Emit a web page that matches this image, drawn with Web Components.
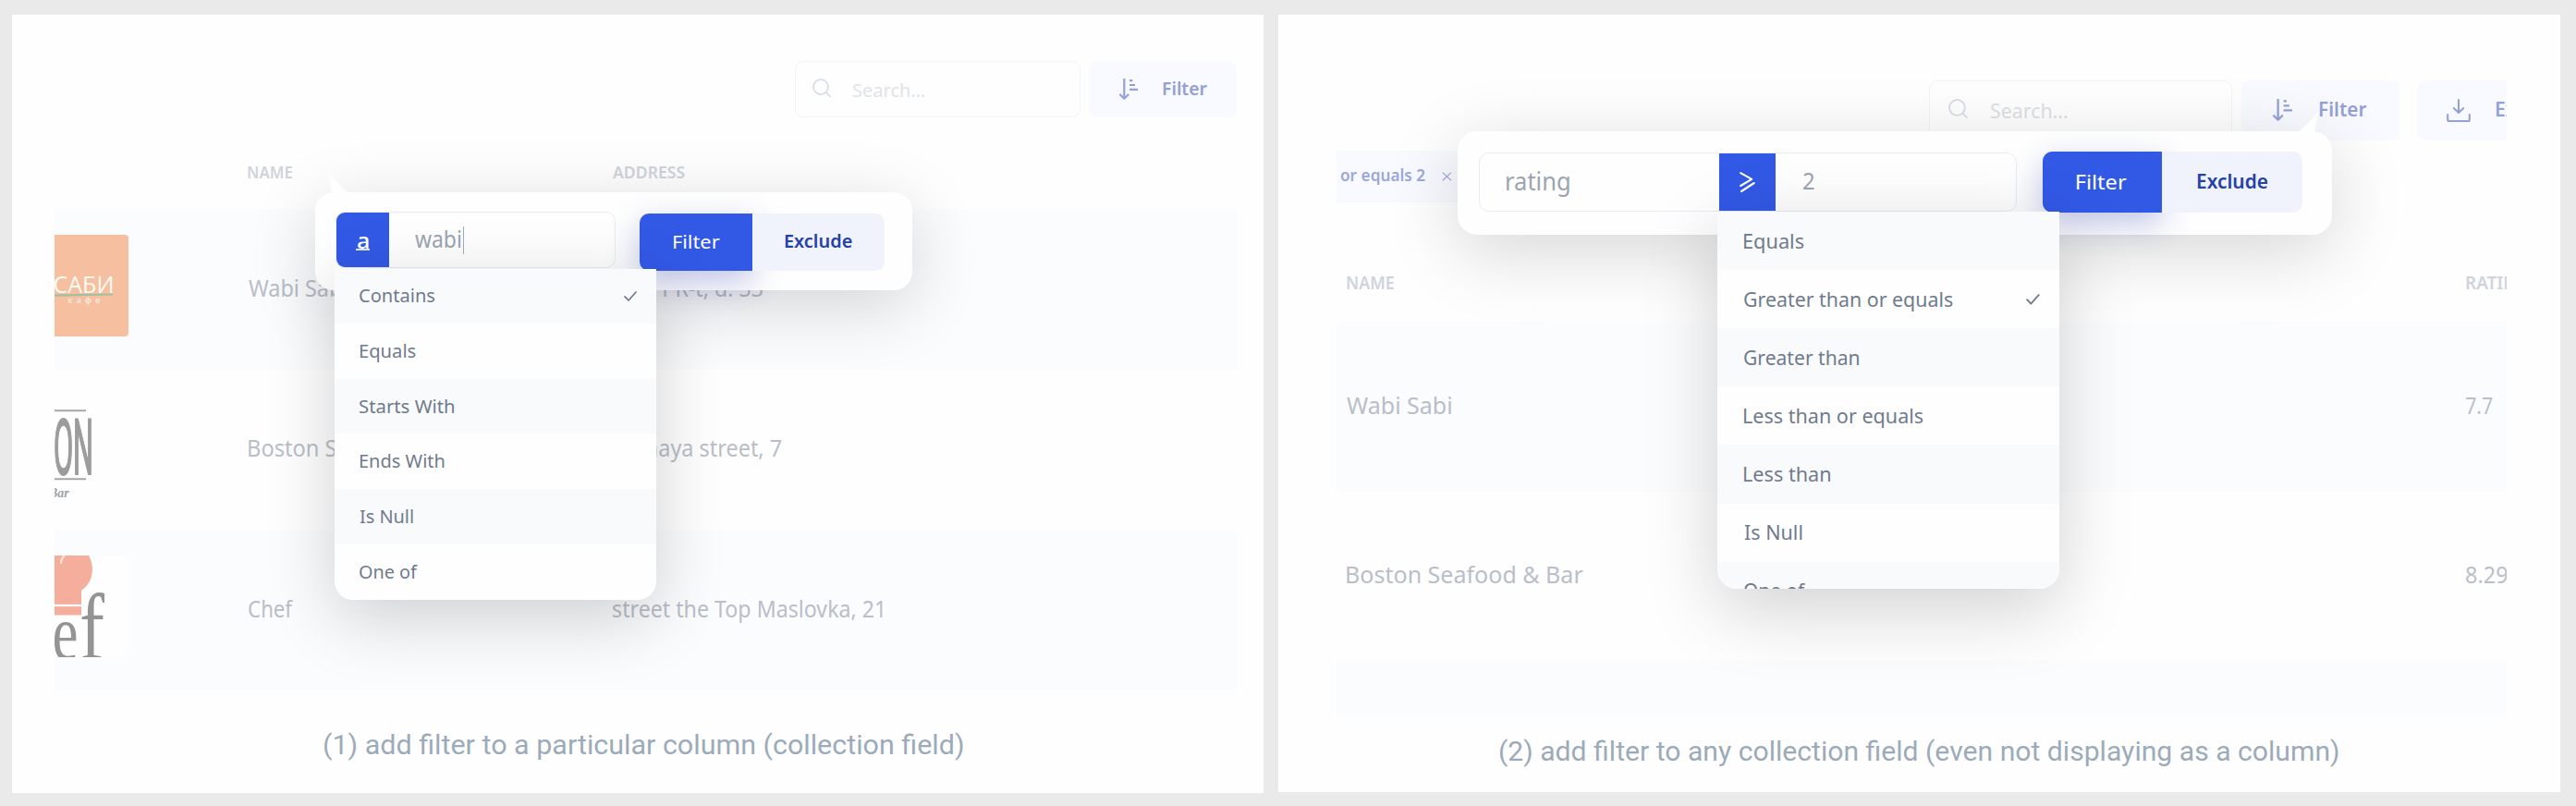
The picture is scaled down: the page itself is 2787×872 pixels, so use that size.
<!DOCTYPE html>
<html lang="en">
<head>
<meta charset="utf-8">
<title>Collection filters</title>
<style>
html,body{margin:0;height:872px;overflow:hidden}
body{background:#eaeaea;font-family:"Noto Sans","Open Sans",sans-serif;box-sizing:border-box;padding:16px 17px 0 13px;display:grid;grid-template-columns:1354px 1387px;column-gap:16px;align-items:start}
</style>
</head>
<body>
<filter-card kind="column" style="--k:1"></filter-card>
<filter-card kind="any" style="--k:1.058"></filter-card>
<script>
const define=(name,html,setup)=>customElements.define(name,class extends HTMLElement{
  connectedCallback(){
    if(this.shadowRoot)return;
    this.attachShadow({mode:'open'}).innerHTML=typeof html==='function'?html(this):html;
    if(setup)setup(this,this.shadowRoot);
  }
});

/* One line of text whose ink spans exactly the width given in "w". */
const ctx=document.createElement('canvas').getContext('2d');
define('fit-text',`<style>
:host{display:block;flex:none;white-space:nowrap;line-height:1.3}
span{display:inline-block;transform-origin:0 0;vertical-align:top}
</style><span><slot></slot></span>`,(el,root)=>{
  const size=+el.getAttribute('size'),weight=el.getAttribute('weight')||400,w=+el.getAttribute('w');
  const font=el.getAttribute('font')||'Noto Sans';
  const family=`"${font}", "Open Sans", sans-serif`;
  Object.assign(el.style,{width:w+'px',fontFamily:family,fontSize:size+'px',fontWeight:weight,color:el.getAttribute('color')||''});
  ctx.font=`${weight} ${size}px ${family}`;
  const m=ctx.measureText(el.textContent.trim());
  const span=root.querySelector('span');
  const laid=(span.getBoundingClientRect().width||m.width)/m.width;
  const s=w/((m.actualBoundingBoxRight+m.actualBoundingBoxLeft)*laid);
  span.style.transform=`translate(${m.actualBoundingBoxLeft*s}px,${el.getAttribute('dy')||0}px) scaleX(${s})`;
});

const icons={
  search:`<svg viewBox="0 0 20 20" fill="none" stroke="#d9dde5" stroke-width="1.8" stroke-linecap="round"><circle cx="9" cy="9" r="8"/><path d="M15 15.2l4 4.2"/></svg>`,
  sort:`<svg viewBox="0 0 20 23" fill="none" stroke="#93a1d6" stroke-width="2.2"><path d="M5.3 0v21"/><path d="M1 17.5l4.3 4.2 4.3-4.2" stroke-linecap="round" stroke-linejoin="round"/><path d="M11 2.2h3.3M11 7h6M11 11.8h9"/></svg>`,
  download:`<svg viewBox="0 0 26 25" fill="none" stroke="#93a1d6" stroke-width="2.1" stroke-linecap="round" stroke-linejoin="round"><path d="M13 1v14M7.8 10l5.2 5 5.2-5M1.2 17v5.5q0 1.5 1.5 1.5h20.6q1.5 0 1.5-1.5V17"/></svg>`,
  check:`<svg viewBox="0 0 14 11" fill="none" stroke="#6f7a8c" stroke-width="1.7" stroke-linecap="round" stroke-linejoin="round"><path d="M1 5.8l4 4.2L13 1"/></svg>`,
  close:`<svg viewBox="0 0 11 10" fill="none" stroke="#a3afdc" stroke-width="1.3"><path d="M.8.6l9.2 8.6M10 .6L.8 9.2"/></svg>`,
  gte:`<svg viewBox="0 0 17 22" fill="none" stroke="#fff" stroke-width="2.1" stroke-linecap="round" stroke-linejoin="round"><path d="M1.2 1.2l12 6.6L1.2 15M2 21l13.8-9"/></svg>`
};
define('ui-icon',el=>`<style>:host{display:block;flex:none}svg{display:block;width:100%;height:100%;overflow:visible}</style>${icons[el.getAttribute('name')]}`);

define('search-box',`<style>
:host{display:flex;align-items:center;box-sizing:border-box;flex:none;height:calc(61.3px*var(--k));border:1.5px solid #f3f4fa;border-radius:calc(9px*var(--k))}
</style><slot></slot>`);

define('tool-button',`<style>
:host{display:flex;align-items:center;box-sizing:border-box;flex:none;height:calc(61.3px*var(--k));border-radius:calc(9px*var(--k));background:#f9faff}
</style><slot></slot>`);

define('table-row',`<style>
:host{display:flex;align-items:center;overflow:hidden;height:calc(173.5px*var(--k));color:#b9bec9}
:host([tinted]){background:#fbfcfe}
:host([head]){align-items:flex-end;box-sizing:border-box;color:#cfd3dc}
</style><slot></slot>`);

define('venue-thumb',el=>`<style>
:host{display:block;flex:none;width:82px;height:110px;margin:0 127.5px 7px 0}
svg{display:block;width:82px;height:110px;overflow:hidden}
</style>`+{
 sabi:`<svg viewBox="0 0 82 110"><path d="M0 0h76q4 0 4 4v102q0 4-4 4H0z" fill="#f6bfa0"/>
  <g fill="#fffaf3" font-family="Open Sans"><text x="-1.5" y="62.5" font-size="25" textLength="66" lengthAdjust="spacingAndGlyphs">САБИ</text>
  <text x="14.5" y="73.5" font-size="9.5" letter-spacing="4.2">кафе</text></g>
  <path d="M0 64.6l62-1.1q3 1 0 2L0 66.8z" fill="#a0c0a0"/></svg>`,
 boston:`<svg viewBox="0 0 82 110"><g stroke="#a6a6a6" stroke-width="2"><path d="M0 16.3h34M0 90.3h34"/></g>
  <g fill="#9c9c9c" font-family="Roboto"><text x="-1" y="85" font-size="83" stroke="#9c9c9c" stroke-width="2.2" textLength="43" lengthAdjust="spacingAndGlyphs">ON</text>
  <text x="-6" y="109.5" font-family="Liberation Serif" font-style="italic" font-weight="700" font-size="14" fill="#a2a2a2">Bar</text></g></svg>`,
 chef:`<svg viewBox="0 0 82 110"><path d="M0 0h76q5 0 5 5v100q0 5-5 5H0z" fill="#fefefe"/>
  <path d="M0 0h37c8 15 3 31-8 37.500v27H0z" fill="#f5ae9b"/><path d="M0 54h29.500" stroke="#fff" stroke-width="2.2"/><path d="M7 9q0-6 4-9" stroke="#fde9e3" stroke-width="2" fill="none"/>
  <g fill="#949494" font-family="Liberation Serif"><text x="-2.500" y="112" font-size="84" textLength="28" lengthAdjust="spacingAndGlyphs">e</text><text x="27" y="112" font-size="101" textLength="27" lengthAdjust="spacingAndGlyphs">f</text></g></svg>`
}[el.getAttribute('name')]);

/* Floating panel with a small pointer. */
define('filter-popover',`<style>
:host{display:flex;align-items:center;box-sizing:border-box;position:absolute;background:#fefefe;height:calc(105.5px*var(--k));border-radius:calc(20px*var(--k));box-shadow:0 calc(17px*var(--k)) calc(75px*var(--k)) rgba(0,0,0,.16)}
.tip{position:absolute;top:-21px;width:22px;height:22px}
:host([tip=left]) .tip{left:14px}
:host([tip=right]) .tip{right:15px;transform:scaleX(-1)}
</style><svg class="tip" viewBox="0 0 22 22"><path d="M0 0L4 22H22Q16 18 0 0z" fill="#fefefe"/></svg><slot></slot>`);

define('field-group',`<style>
:host{display:flex;align-items:center;flex:none;box-sizing:border-box;height:calc(61px*var(--k));border:1.5px solid #e9ecf6;border-radius:calc(10px*var(--k));overflow:hidden;color:#9aa4b2}
</style><slot></slot>`);

define('match-mode',`<style>
:host{display:flex;flex-direction:column;align-items:center;justify-content:center;flex:none;align-self:stretch;background:#3259e6;width:calc(57.6px*var(--k))}
</style><slot></slot>`);

define('action-pair',`<style>
:host{display:flex;flex:none;height:calc(61.6px*var(--k))}
div{display:flex;align-items:center;justify-content:center}
.go{width:calc(122.2px*var(--k));background:#3259e6;border-radius:calc(10px*var(--k)) 0 0 calc(10px*var(--k));box-shadow:0 12px 34px rgba(45,65,175,.3)}
.no{flex:1;background:#f0f3fc;border-radius:0 calc(10px*var(--k)) calc(10px*var(--k)) 0;position:relative}
</style><div class="go"><slot name="go"></slot></div><div class="no"><slot name="no"></slot></div>`);

define('option-menu',`<style>
:host{display:block;position:absolute;box-sizing:border-box;background:#fefefe;overflow:hidden;border-radius:0 0 calc(20px*var(--k)) calc(20px*var(--k));box-shadow:0 calc(20px*var(--k)) calc(75px*var(--k)) rgba(0,0,0,.18)}
</style><slot></slot>`);

define('menu-option',`<style>
:host{display:flex;align-items:center;justify-content:space-between;box-sizing:border-box;height:calc(59.65px*var(--k));padding:0 calc(20.5px*var(--k)) 0 calc(26.8px*var(--k));color:#6f7b8d}
:host(:nth-child(odd)){background:#f9fafc}
ui-icon{width:calc(14px*var(--k));height:calc(11px*var(--k))}
</style><slot></slot>`,(el,root)=>{
  if(el.hasAttribute('checked'))root.innerHTML+='<ui-icon name="check"></ui-icon>';
});

const options=(list,size,checked)=>list.map(([t,w],i)=>`<menu-option ${i===checked?'checked':''}><fit-text w="${w}" size="${size}" dy="-.4">${t}</fit-text></menu-option>`).join('');

const column=`<style>
:host{display:flex;flex-direction:column;position:relative;box-sizing:border-box;background:#fefefe;height:842px;padding:50px 28.6px 0 46px;overflow:hidden}
.bar{display:flex;justify-content:flex-end;gap:9.5px;height:61.5px}
search-box{width:309px;padding-left:18.5px}
search-box ui-icon{width:20px;height:20px;margin:-3px 23.5px 0 0}
tool-button{width:160px;padding-left:32.5px}
tool-button ui-icon{width:20px;height:23px;margin-right:27px}
table-row[head]{height:98.5px;padding:0 0 28px 209.3px;gap:346px}
.name{width:394.7px;flex:none}
.note{margin:39px 0 0 291px}
filter-popover{left:328px;top:192px;width:646px;padding-left:21.5px;gap:26.5px}
field-group{width:303px;margin-bottom:2px}
match-mode i{display:block;width:14.5px;height:2.5px;background:#dfe6fc;margin-top:-11px}
.caret{width:1.7px;height:30px;background:#a3abba;margin-left:2px}
field-group>fit-text{margin-left:28px}
action-pair{width:264.7px;margin-top:2px}
option-menu{left:349px;top:274.5px;width:347.8px;height:358.2px}
</style>
<div class="bar">
 <search-box><ui-icon name="search"></ui-icon><fit-text w="78" size="20.5" color="#e0e3e8" dy=".8">Search...</fit-text></search-box>
 <tool-button><ui-icon name="sort"></ui-icon><fit-text w="48" size="20.5" weight="600" color="#93a1d6" dy="-1.2">Filter</fit-text></tool-button>
</div>
<table-row head><fit-text w="48.5" size="18.5" weight="600">NAME</fit-text><fit-text w="78" size="18.5" weight="600">ADDRESS</fit-text></table-row>
<table-row tinted><venue-thumb name="sabi"></venue-thumb><div class="name"><fit-text w="106" size="24.8" dy="-1.6">Wabi Sabi</fit-text></div><fit-text w="162" size="24.8" dy="-1.6">Mira PR-t, d. 33</fit-text></table-row>
<table-row><venue-thumb name="boston"></venue-thumb><div class="name"><fit-text w="241" size="24.8" dy="-1.6">Boston Seafood &amp; Bar</fit-text></div><fit-text w="182" size="24.8" dy="-1.6">Lesnaya street, 7</fit-text></table-row>
<table-row tinted><venue-thumb name="chef"></venue-thumb><div class="name"><fit-text w="48.3" size="24.8" dy="-1.6">Chef</fit-text></div><fit-text w="291.5" size="24.8" dy="-1.6">street the Top Maslovka, 21</fit-text></table-row>
<fit-text class="note" font="Roboto" w="692" size="30.3" color="#9cabb9">(1) add filter to a particular column (collection field)</fit-text>
<filter-popover tip="left">
 <field-group><match-mode><fit-text w="11.5" size="24" weight="500" color="#fff" dy="-4">a</fit-text><i></i></match-mode><fit-text w="49.5" size="25" dy="-1.8">wabi</fit-text><span class="caret"></span></field-group>
 <action-pair><fit-text slot="go" w="50.5" size="19.8" color="#fff">Filter</fit-text><fit-text slot="no" w="72.5" size="20.2" weight="600" color="#2541a6" dy="-1.8">Exclude</fit-text></action-pair>
</filter-popover>
<option-menu>${options([['Contains',81.3],['Equals',60.7],['Starts With',102.3],['Ends With',91.5],['Is Null',58],['One of',63]],20,0)}</option-menu>`;

const any=`<style>
:host{display:flex;flex-direction:column;position:relative;box-sizing:border-box;background:#fefefe;height:841px;padding:71px 58px 0 62.5px;overflow:hidden}
.bar{display:flex;height:65px;overflow:hidden;padding-left:641px}
search-box{width:328.5px;padding-left:20px}
search-box ui-icon{width:21px;height:21px;margin:-3px 25px 0 0}
tool-button{width:172px;margin-left:9.5px;padding-left:34.5px}
tool-button.out{width:180px;margin-left:18.5px;padding-left:32px}
tool-button ui-icon{width:21px;height:24px;margin-right:29.5px}
.out ui-icon{width:26px;height:25px;margin-right:27.5px}
.tag{display:flex;align-items:center;gap:18px;width:141px;height:55.5px;margin-top:11px;background:#f9faff;padding-left:4px;box-sizing:border-box}
.tag ui-icon{width:11px;height:10px}
table-row{padding-left:11.5px}
table-row[head]{height:129.5px;padding-bottom:29.5px}
table-row[last]{height:59px}
.name{width:1211px;flex:none}
.note{margin:19px 0 0 176.5px}
filter-popover{left:194px;top:126px;width:945.5px;padding:0 0 1.5px 22.5px;gap:28px}
field-group{width:582px}
field-group>.f{margin:0 162.5px 0 29.5px}
field-group>.v{margin-left:30px}
match-mode ui-icon{width:17px;height:22px}
action-pair{width:281.5px}
option-menu{left:475px;top:213px;width:370px;height:407.7px}
menu-option{padding-left:29.3px}
</style>
<div class="bar">
 <search-box><ui-icon name="search"></ui-icon><fit-text w="83" size="21.6" color="#dddfe5" dy="1.2">Search...</fit-text></search-box>
 <tool-button><ui-icon name="sort"></ui-icon><fit-text w="51" size="21.6" weight="600" color="#93a1d6" dy="-1.2">Filter</fit-text></tool-button>
 <tool-button class="out"><ui-icon name="download"></ui-icon><fit-text w="66" size="21.6" weight="600" color="#93a1d6" dy="-1.2">Export</fit-text></tool-button>
</div>
<div class="tag"><fit-text w="92" size="17.8" weight="600" color="#9ba8da" dy="-1">or equals 2</fit-text><ui-icon name="close"></ui-icon></div>
<table-row head><div class="name"><fit-text w="51" size="19.4" weight="600">NAME</fit-text></div><fit-text w="68" size="19.4" weight="600">RATING</fit-text></table-row>
<table-row tinted><div class="name"><fit-text w="113" size="26" dy="-.6">Wabi Sabi</fit-text></div><fit-text w="28.5" size="26" dy="-.6">7.7</fit-text></table-row>
<table-row><div class="name"><fit-text w="256" size="26" dy="-.6">Boston Seafood &amp; Bar</fit-text></div><fit-text w="45" size="26" dy="-.6">8.29</fit-text></table-row>
<table-row tinted last></table-row>
<fit-text class="note" font="Roboto" w="908" size="30.3" color="#9cabb9">(2) add filter to any collection field (even not displaying as a column)</fit-text>
<filter-popover tip="right">
 <field-group><fit-text class="f" w="67.5" size="26.4" dy="-1.2">rating</fit-text><match-mode><ui-icon name="gte"></ui-icon></match-mode><fit-text class="v" w="12" size="26" dy="-1.2">2</fit-text></field-group>
 <action-pair><fit-text slot="go" w="54" size="21" color="#fff" dy=".8">Filter</fit-text><fit-text slot="no" w="76.5" size="21.4" weight="600" color="#2541a6" dy="-1.4">Exclude</fit-text></action-pair>
</filter-popover>
<option-menu>${options([['Equals',65],['Greater than or equals',226],['Greater than',124.5],['Less than or equals',194],['Less than',93.5],['Is Null',62.5],['One of',67]],21.2,1)}</option-menu>`;

define('filter-card',el=>el.getAttribute('kind')==='column'?column:any);
</script>
</body>
</html>
